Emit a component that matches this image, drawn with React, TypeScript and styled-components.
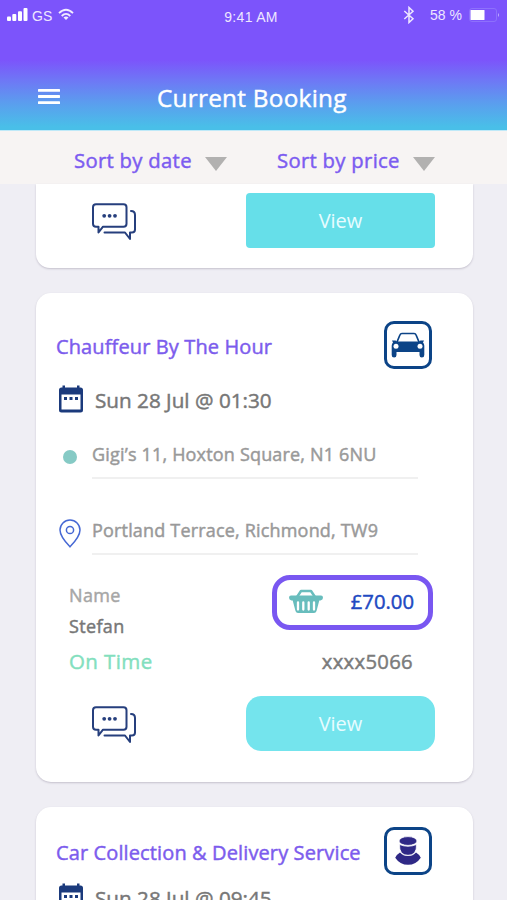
import React from "react";
import styled, { createGlobalStyle, css } from "styled-components";

const GlobalStyle = createGlobalStyle`
  * { box-sizing: border-box; }
  body { margin: 0; font-family: "Open Sans", "Noto Sans", sans-serif; }
`;

/* Regular weight thickened to a medium, which Open Sans has no static cut for. */
const medium = css`
  font-weight: 400;
  -webkit-text-stroke: 0.45px currentColor;
`;

const Screen = styled.main`
  display: flex;
  flex-direction: column;
  width: 507px;
  height: 900px;
  overflow: hidden;
  background: #efeef4;
`;

const Header = styled.header`
  flex: none;
  height: 131px;
  background: linear-gradient(#7c54fb 0, #7c54fb 60px, #6d7af5 82px, #5a9fee 104px, #49bfe8 127px);
  border-bottom: 1px solid #bfe9f8;
  color: #fff;
`;

const StatusBar = styled.div`
  display: grid;
  grid-template-columns: 1fr auto 1fr;
  height: 32px;
  padding: 0 7px 0 7px;
  font-family: "Liberation Sans", sans-serif;
  font-size: 14px;
  line-height: 16px;
  color: #eee7ff;
`;

const StatusGroup = styled.div<{ $end?: boolean }>`
  display: flex;
  align-items: flex-start;
  justify-content: ${(p) => (p.$end ? "flex-end" : "flex-start")};
  padding-top: 6px;
`;

const StatusItem = styled.span<{ $top?: number; $left?: number }>`
  margin-top: ${(p) => p.$top ?? 0}px;
  margin-left: ${(p) => p.$left ?? 0}px;
  white-space: nowrap;
  svg { display: block; }
`;

const Clock = styled.time`
  margin: 3px 5px 0 0;
  letter-spacing: 0.3px;
`;

const NavBar = styled.nav`
  display: flex;
  align-items: center;
  height: 98px;
  padding: 30px 0 0 38px;
`;

const MenuButton = styled.button`
  display: flex;
  padding: 0;
  border: 0;
  background: none;
  color: #fff;
`;

const Title = styled.h1`
  margin: 4px 0 0 97px;
  font-size: 24.3px;
  ${medium}
  letter-spacing: 0.28px;
  line-height: 30px;
  white-space: nowrap;
`;

const SortBar = styled.div`
  flex: none;
  display: flex;
  height: 53px;
  padding: 14px 0 0 74px;
  background: #f7f4f3;
`;

const SortButton = styled.button<{ $width: number; $gap: number }>`
  display: flex;
  align-items: flex-start;
  justify-content: space-between;
  width: ${(p) => p.$width}px;
  height: 30px;
  margin-right: ${(p) => p.$gap}px;
  padding: 0;
  border: 0;
  background: none;
  font: 400 20.3px/31px "Open Sans", "Noto Sans", sans-serif;
  ${medium}
  letter-spacing: 0.3px;
  color: #7c5cf0;
  white-space: nowrap;
  svg { margin-top: 12px; }
`;

const Card = styled.article<{ $height: number; $cut?: boolean }>`
  flex: none;
  height: ${(p) => p.$height}px;
  margin: 0 34px 25px 36px;
  border-radius: ${(p) => (p.$cut ? "0 0 14px 14px" : "15px")};
  background: #fff;
  box-shadow: 0 1px 2px rgba(70, 60, 90, 0.25);
`;

const CardHeader = styled.div<{ $compact?: boolean }>`
  display: flex;
  justify-content: space-between;
  height: ${(p) => (p.$compact ? 68 : 76)}px;
  padding: ${(p) => (p.$compact ? 20 : 28)}px 41px 0 20px;
`;

const ServiceName = styled.h2`
  margin: 12px 0 0;
  font-size: 20px;
  ${medium}
  line-height: 28px;
  letter-spacing: 0.12px;
  color: #7c5ced;
  white-space: nowrap;
`;

const ServiceBadge = styled.div`
  display: flex;
  align-items: center;
  justify-content: center;
  width: 48px;
  height: 48px;
  border: 3px solid #0c4487;
  border-radius: 10px;
`;

const Schedule = styled.div<{ $compact?: boolean }>`
  display: flex;
  height: 72px;
  padding: ${(p) => (p.$compact ? 8 : 16)}px 0 0 22px;
`;

const ScheduleText = styled.time`
  height: 30px;
  margin: 0 0 0 11px;
  font-size: 20.7px;
  ${medium}
  line-height: 30px;
  color: #777;
  white-space: nowrap;
`;

const Places = styled.div`
  display: flex;
  flex-direction: column;
  gap: 38px;
  padding-left: 22px;
`;

const Place = styled.div`
  display: grid;
  grid-template-columns: 34px 326px;
  height: 38px;
`;

const Marker = styled.div`
  display: flex;
  align-items: center;
  justify-content: center;
  width: 24px;
  height: 32px;
`;

const Dot = styled.span`
  width: 14px;
  height: 14px;
  border-radius: 50%;
  background: #86cac5;
`;

const Address = styled.div`
  border-bottom: 2px solid #f0f0f0;
  font-size: 18px;
  ${medium}
  line-height: 27px;
  letter-spacing: 0.18px;
  color: #999;
  white-space: nowrap;
`;

const Summary = styled.div`
  display: flex;
  justify-content: space-between;
  height: 112px;
  padding: 20px 40px 0 33px;
`;

const Passenger = styled.div`
  display: flex;
  flex-direction: column;
  padding-top: 5px;
`;

const Label = styled.span`
  flex: none;
  height: 31px;
  font-size: 18px;
  ${medium}
  line-height: 31px;
  letter-spacing: 0.35px;
  color: #a6a6a6;
`;

const Value = styled(Label)`
  color: #777;
`;

const Status = styled(Label)`
  height: 38px;
  font-size: 20.5px;
  line-height: 38px;
  letter-spacing: 0.4px;
  color: #83dfbe;
  white-space: nowrap;
`;

const Payment = styled.div`
  display: flex;
  flex-direction: column;
  align-items: flex-end;
`;

const Price = styled.div`
  flex: none;
  display: flex;
  align-items: center;
  justify-content: space-between;
  width: 161px;
  height: 55px;
  padding: 0 14px 3px 12px;
  border: 5px solid #7957f1;
  border-radius: 18px;
  font-size: 20.3px;
  ${medium}
  color: #2149c2;
`;

const CardNumber = styled.span`
  flex: none;
  margin: 16px 20px 0 0;
  font-size: 20.3px;
  ${medium}
  line-height: 30px;
  letter-spacing: 0.3px;
  color: #7b7b7b;
`;

const Actions = styled.div<{ $top: number }>`
  display: flex;
  align-items: flex-start;
  justify-content: space-between;
  padding: ${(p) => p.$top}px 38px 0 56px;
  > svg { margin-top: 10px; }
`;

const ViewButton = styled.button<{ $round?: boolean }>`
  width: 189px;
  height: 55px;
  padding: 0;
  border: 0;
  border-radius: ${(p) => (p.$round ? 15 : 4)}px;
  background: ${(p) => (p.$round ? "#74e4ed" : "#66dfe9")};
  font: 400 20px/55px "Open Sans", "Noto Sans", sans-serif;
  color: #e7fcff;
`;

const SignalIcon = () => (
  <svg width="21" height="13" viewBox="0 0 21 13" fill="#fff">
    <rect x="0" y="8.5" width="4" height="4.5" rx="1" />
    <rect x="5.3" y="6" width="4" height="7" rx="1" />
    <rect x="11" y="3.3" width="4" height="9.7" rx="1" />
    <rect x="16.5" y="0" width="4" height="13" rx="1" />
  </svg>
);

const WifiIcon = () => (
  <svg width="16" height="13" viewBox="0 0 16 13" fill="none" stroke="#f2edff" strokeWidth="1.8">
    <path d="M1 5.2Q8-1.7 15 5.2M3.7 8Q8 3.7 12.3 8" />
    <path d="M5.5 9.4Q8 7.5 10.5 9.4L8 12z" fill="#f2edff" stroke="none" />
  </svg>
);

const BluetoothIcon = () => (
  <svg width="12" height="18" viewBox="0 0 12 18" fill="none" stroke="#eee7ff" strokeWidth="1.5">
    <path d="M1.3 5 10 12.7 6 16.5v-15L10 5.3 1.3 13" />
  </svg>
);

const BatteryIcon = () => (
  <svg width="31" height="14" viewBox="0 0 31 14">
    <rect x=".5" y=".5" width="27" height="13" rx="2.5" fill="none" stroke="#8d70fb" />
    <rect x="1.5" y="2" width="14" height="10" rx=".5" fill="#fff" />
    <path d="M29 5q2 2 0 4z" fill="#c0afff" />
  </svg>
);

const MenuIcon = () => (
  <svg width="22" height="17" viewBox="0 0 22 17" fill="#fff">
    <rect y="1" width="22" height="2.8" rx=".6" />
    <rect y="7.1" width="22" height="2.8" rx=".6" />
    <rect y="13.2" width="22" height="2.8" rx=".6" />
  </svg>
);

const CaretIcon = () => (
  <svg width="22" height="14" viewBox="0 0 22 14">
    <path d="M0 0h22L11 14z" fill="#b2b1b0" />
  </svg>
);

const ChatIcon = () => (
  <svg width="44" height="38" viewBox="0 0 44 38" fill="none" stroke="#263f7d" strokeWidth="2" strokeLinejoin="round" strokeLinecap="round">
    <path d="M4 1.3h27.5q3 0 3 3v16.4q0 3-3 3H11L6.5 29.5V23.7H4q-3 0-3-3V4.3q0-3 3-3z" />
    <path d="M39 8q4 0 4 4v14.5q0 3-3 3H38V36l-5-6.500H12.500" />
    <g fill="#263f7d" stroke="none">
      <circle cx="12.200" cy="12.800" r="1.900" />
      <circle cx="17.600" cy="12.800" r="1.900" />
      <circle cx="23" cy="12.800" r="1.900" />
    </g>
  </svg>
);

const CalendarIcon = () => (
  <svg width="26" height="28" viewBox="0 0 26 28">
    <path d="M4.500 0h2.500v2h12V0h2.500v2h1q2.500 0 2.500 2.500v20q0 2.500-2.500 2.500h-19Q1 27 1 24.500v-20Q1 2 3.500 2h1z" fill="#1b3a7c" transform="translate(0 .5)" />
    <path d="M3.500 9.500h19V24.500h-19z" fill="#fff" />
    <path d="M6 12h3v3H6zm5.500 0h3v3h-3zm5.500 0h3v3h-3z" fill="#1b3a7c" />
  </svg>
);

const PinIcon = () => (
  <svg width="22" height="29" viewBox="0 0 22 29" fill="none" stroke="#4668d4" strokeWidth="1.5">
    <path d="M11 27.800Q1 17.500 1 11A10 10 0 0 1 21 11Q21 17.500 11 27.800z" />
    <circle cx="11" cy="11" r="3.600" />
  </svg>
);

const CarIcon = () => (
  <svg width="34" height="26" viewBox="0 0 34 26" fill="#0c4487">
    <path d="M6 10 9 2.800q.5-1.300 1.900-1.300h12.200q1.400 0 1.900 1.300L28 10" fill="none" stroke="#0c4487" strokeWidth="1.700" />
    <path d="M1 8.600h3.500L6 9.500h22l1.500-.9H33l-1 1.800q1.300 1.500 1.300 3.300v9.300q0 2.500-2.400 2.500T28.500 23v-3h-23v3q0 2.500-2.400 2.500T.7 23v-9.300q0-1.800 1.300-3.300z" />
    <circle cx="5" cy="14.300" r="2.500" fill="#fff" />
    <circle cx="29" cy="14.300" r="2.500" fill="#fff" />
  </svg>
);

const DriverIcon = () => (
  <svg width="26" height="30" viewBox="0 0 26 30" fill="#2f2986">
    <path d="M5 16.500q3 3.500 8 3.500t8-3.500q3 1.700 4.800 5.200Q21 28.800 13 28.800T.2 21.700Q2 18.200 5 16.500z" />
    <path d="M4.500 8.500Q13 12 21.500 8.500q.5 10.800-8.500 10.800T4.500 8.500z" stroke="#fff" strokeWidth=".8" />
    <ellipse cx="13" cy="5" rx="9" ry="4.400" stroke="#fff" strokeWidth=".8" />
  </svg>
);

const BasketIcon = () => (
  <svg width="34" height="25" viewBox="0 0 34 25" fill="#68bdbd">
    <path d="M8 8 12 2h10l4 6" fill="none" stroke="#68bdbd" strokeWidth="2.500" strokeLinejoin="round" />
    <path d="M2 6.500h30q2 0 2 2.300t-2.500 2.800h-1.200L27.500 22q-.6 2-2.500 2H9q-1.900 0-2.500-2L3.700 11.600H2.500Q0 11.100 0 8.800t2-2.300z" />
    <path d="M9 13.500v7M14.300 13.500v7M19.700 13.500v7M25 13.500v7" stroke="#fff" strokeWidth="2.300" strokeLinecap="round" />
  </svg>
);

type IntroProps = { name: string; date: string; icon: React.ReactNode; compact?: boolean };

function BookingIntro({ name, date, icon, compact }: IntroProps) {
  return (
    <>
      <CardHeader $compact={compact}>
        <ServiceName>{name}</ServiceName>
        <ServiceBadge>{icon}</ServiceBadge>
      </CardHeader>
      <Schedule $compact={compact}>
        <CalendarIcon />
        <ScheduleText>{date}</ScheduleText>
      </Schedule>
    </>
  );
}

export default function App() {
  return (
    <Screen>
      <GlobalStyle />
      <Header>
        <StatusBar>
          <StatusGroup>
            <StatusItem $top={2}><SignalIcon /></StatusItem>
            <StatusItem $left={4} $top={2}>GS</StatusItem>
            <StatusItem $left={6} $top={2}><WifiIcon /></StatusItem>
          </StatusGroup>
          <StatusGroup>
            <Clock>9:41 AM</Clock>
          </StatusGroup>
          <StatusGroup $end>
            <BluetoothIcon />
            <StatusItem $left={15} $top={1}>58 %</StatusItem>
            <StatusItem $left={7} $top={2}><BatteryIcon /></StatusItem>
          </StatusGroup>
        </StatusBar>
        <NavBar>
          <MenuButton aria-label="Menu"><MenuIcon /></MenuButton>
          <Title>Current Booking</Title>
        </NavBar>
      </Header>
      <SortBar>
        <SortButton $width={153} $gap={50}>Sort by date<CaretIcon /></SortButton>
        <SortButton $width={158} $gap={0}>Sort by price<CaretIcon /></SortButton>
      </SortBar>
      <Card $height={84} $cut>
        <Actions $top={9}>
          <ChatIcon />
          <ViewButton>View</ViewButton>
        </Actions>
      </Card>
      <Card $height={489}>
        <BookingIntro name="Chauffeur By The Hour" date="Sun 28 Jul @ 01:30" icon={<CarIcon />} />
        <Places>
          <Place>
            <Marker><Dot /></Marker>
            <Address>Gigi’s 11, Hoxton Square, N1 6NU</Address>
          </Place>
          <Place>
            <Marker><PinIcon /></Marker>
            <Address>Portland Terrace, Richmond, TW9</Address>
          </Place>
        </Places>
        <Summary>
          <Passenger>
            <Label>Name</Label>
            <Value>Stefan</Value>
            <Status>On Time</Status>
          </Passenger>
          <Payment>
            <Price><BasketIcon />£70.00</Price>
            <CardNumber>xxxx5066</CardNumber>
          </Payment>
        </Summary>
        <Actions $top={29}>
          <ChatIcon />
          <ViewButton $round>View</ViewButton>
        </Actions>
      </Card>
      <Card $height={489}>
        <BookingIntro compact name="Car Collection & Delivery Service" date="Sun 28 Jul @ 09:45" icon={<DriverIcon />} />
      </Card>
    </Screen>
  );
}
